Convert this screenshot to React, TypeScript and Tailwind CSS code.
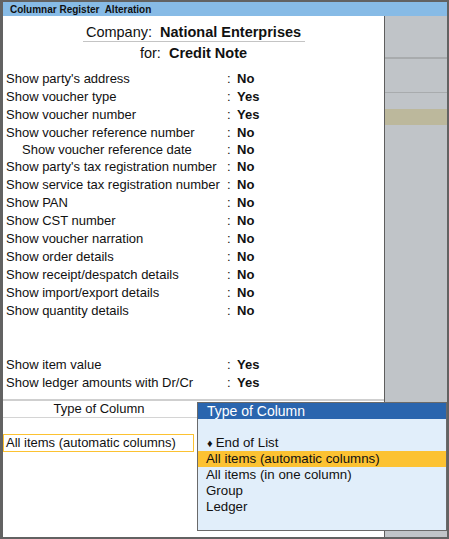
const rows: { label: string; value: string; indent?: boolean; h: string }[] = [
  { label: "Show party's address", value: 'No', h: 'h-[18px]' },
  { label: 'Show voucher type', value: 'Yes', h: 'h-[18px]' },
  { label: 'Show voucher number', value: 'Yes', h: 'h-[18px]' },
  { label: 'Show voucher reference number', value: 'No', h: 'h-[17px]' },
  { label: 'Show voucher reference date', value: 'No', indent: true, h: 'h-[17px]' },
  { label: "Show party's tax registration number", value: 'No', h: 'h-[18px]' },
  { label: 'Show service tax registration number', value: 'No', h: 'h-[18px]' },
  { label: 'Show PAN', value: 'No', h: 'h-[18px]' },
  { label: 'Show CST number', value: 'No', h: 'h-[18px]' },
  { label: 'Show voucher narration', value: 'No', h: 'h-[18px]' },
  { label: 'Show order details', value: 'No', h: 'h-[18px]' },
  { label: 'Show receipt/despatch details', value: 'No', h: 'h-[18px]' },
  { label: 'Show import/export details', value: 'No', h: 'h-[18px]' },
  { label: 'Show quantity details', value: 'No', h: 'h-[18px]' },
];

const extraRows = [
  { label: 'Show item value', value: 'Yes' },
  { label: 'Show ledger amounts with Dr/Cr', value: 'Yes' },
];

const options = ['All items (automatic columns)', 'All items (in one column)', 'Group', 'Ledger'];

function Row({ label, value, indent, h }: { label: string; value: string; indent?: boolean; h: string }) {
  return (
    <div className={`flex items-center ${h} text-[13px] text-[#111]`}>
      <span className={`w-[221px] whitespace-nowrap ${indent ? 'pl-[16px]' : ''}`}>{label}</span>
      <span className="w-[10px]">:</span>
      <span className="font-bold">{value}</span>
    </div>
  );
}

export default function App() {
  return (
    <div
      className="relative w-[449px] h-[539px] flex flex-col border-l-[3px] border-t-2 border-r-2 border-b-2 border-[#626262] bg-white"
      style={{ fontFamily: '"Liberation Sans", Arial, sans-serif' }}
    >
      {/* title bar */}
      <div className="h-[14px] bg-[#87bbe6] flex items-center pl-[7px] text-[10px] font-bold text-[#111] whitespace-pre">
        Columnar Register  Alteration
      </div>

      <div className="flex flex-1">
        {/* main form */}
        <div className="w-[381px] flex flex-col bg-white">
          <div className="flex justify-center mt-[8px]">
            <div className="w-[222px] h-[18px] flex items-center justify-center border-b border-[#c4c4c4] text-[14.5px] text-[#111] whitespace-pre">
              <span>Company:  </span>
              <span className="font-bold">National Enterprises</span>
            </div>
          </div>
          <div className="h-[18px] mt-[3px] flex items-center justify-center text-[14.5px] text-[#111] whitespace-pre">
            <span>for:  </span>
            <span className="font-bold">Credit Note</span>
          </div>

          <div className="flex flex-col pl-[3px] mt-[7px]">
            {rows.map((r) => (
              <Row key={r.label} {...r} />
            ))}
          </div>

          <div className="flex flex-col pl-[3px] mt-[36px]">
            {extraRows.map((r) => (
              <Row key={r.label} label={r.label} value={r.value} h="h-[18px]" />
            ))}
          </div>

          <div className="mt-[7px] h-[2px] bg-[#cfcfcf]" />
          <div className="h-[16px] flex items-center text-[13px] text-[#111]">
            <span className="w-[192px] text-center">Type of Column</span>
          </div>
          <div className="h-px bg-[#d4d4d4] w-[195px]" />

          <div className="mt-[16px] w-[191px] h-[18px] flex items-center pl-[2px] border border-[#fcc232] text-[13px] text-[#111] whitespace-nowrap">
            All items (automatic columns)
          </div>
        </div>

        <div className="w-px bg-[#5e5e5e]" />

        {/* right side panel */}
        <div className="flex-1 flex flex-col bg-[#c0c4c8]">
          <div className="h-[41px]" />
          <div className="h-[2px] bg-[#a8abad]" />
          <div className="h-[33px]" />
          <div className="h-px bg-[#a8abad]" />
          <div className="h-[16px]" />
          <div className="h-[16px] bg-[#bcb89c]" />
        </div>
      </div>

      {/* Type of Column popup */}
      <div className="absolute left-[194px] top-[400px] w-[250px] h-[129px] border border-[#6a6a6a] bg-[#e1eefa] flex flex-col">
        <div className="h-[16px] bg-[#2a65ae] text-white text-[14px] flex items-center pl-[9px]">Type of Column</div>
        <div className="flex flex-col pt-[16px] text-[13.3px] text-[#111]">
          <div className="h-[16px] flex items-center pl-[9px]">
            <span className="text-[11px] mr-[3px]">♦</span>End of List
          </div>
          {options.map((o, i) => (
            <div
              key={o}
              className={`h-[16px] flex items-center pl-[8px] whitespace-nowrap ${i === 0 ? 'bg-[#fcc232]' : ''}`}
            >
              {o}
            </div>
          ))}
        </div>
      </div>
    </div>
  );
}
